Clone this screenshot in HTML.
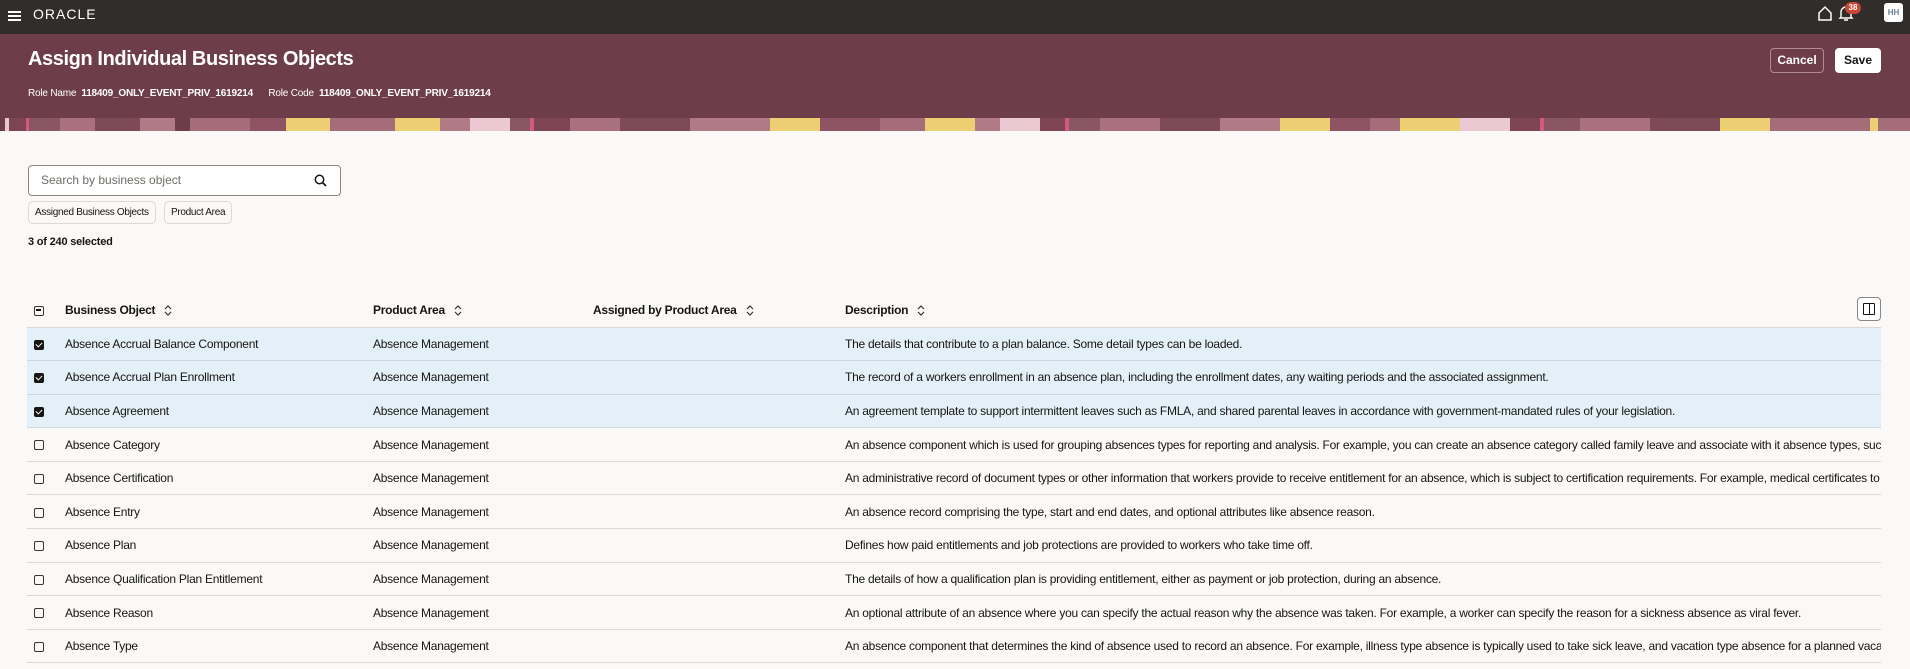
<!DOCTYPE html>
<html><head><meta charset="utf-8">
<style>
*{box-sizing:border-box;margin:0;padding:0}
body{width:1910px;height:669px;overflow:hidden;background:#faf9f8;font-family:"Liberation Sans",sans-serif;color:#161513;position:relative}
.top{position:absolute;left:0;top:0;width:1910px;height:34px;background:#312d2a}
.hdr{position:absolute;left:0;top:34px;width:1910px;height:97px;background:#6e3d4a}
.pat{position:absolute;left:0;top:118px;width:1910px;height:13px;background:
linear-gradient(90deg,#6e3d4a 0,#6e3d4a 5px,#e8c9d0 5px,#e8c9d0 9px,#7d4453 9px,#7d4453 26px,#d45a7c 26px,#d45a7c 29px,#8a5564 29px,#8a5564 60px,#a9707f 60px,#a9707f 95px,#7e4a57 95px,#7e4a57 140px,#b07a87 140px,#b07a87 175px,#6e3d4a 175px,#6e3d4a 190px,#a56d7a 190px,#a56d7a 250px,#8f5463 250px,#8f5463 286px,#eccf72 286px,#eccf72 330px,#a56d7a 330px,#a56d7a 395px,#eccf72 395px,#eccf72 440px,#b07a87 440px,#b07a87 470px,#ecc8d2 470px,#ecc8d2 510px,#8a5564 510px,#8a5564 530px,#d45a7c 530px,#d45a7c 534px,#7d4453 534px,#7d4453 570px,#a9707f 570px,#a9707f 620px,#7e4a57 620px,#7e4a57 690px,#b07a87 690px,#b07a87 770px,#eccf72 770px,#eccf72 820px,#8f5463 820px,#8f5463 880px,#a56d7a 880px,#a56d7a 925px,#eccf72 925px,#eccf72 975px,#b07a87 975px,#b07a87 1000px,#ecc8d2 1000px,#ecc8d2 1040px,#7d4453 1040px,#7d4453 1065px,#d45a7c 1065px,#d45a7c 1069px,#8a5564 1069px,#8a5564 1100px,#a9707f 1100px,#a9707f 1160px,#7e4a57 1160px,#7e4a57 1220px,#b07a87 1220px,#b07a87 1280px,#eccf72 1280px,#eccf72 1330px,#8f5463 1330px,#8f5463 1370px,#a56d7a 1370px,#a56d7a 1400px,#eccf72 1400px,#eccf72 1460px,#ecc8d2 1460px,#ecc8d2 1510px,#7d4453 1510px,#7d4453 1540px,#d45a7c 1540px,#d45a7c 1544px,#8a5564 1544px,#8a5564 1580px,#a9707f 1580px,#a9707f 1650px,#7e4a57 1650px,#7e4a57 1720px,#eccf72 1720px,#eccf72 1770px,#a56d7a 1770px,#a56d7a 1870px,#eccf72 1870px,#eccf72 1878px,#a56d7a 1878px)}
.abs{position:absolute;white-space:nowrap}
.btn{position:absolute;top:48px;height:25px;border-radius:4px;font-size:12px;font-weight:bold;text-align:center;line-height:23px}
.search{position:absolute;left:28px;top:165px;width:313px;height:31px;border:1px solid #8c8782;border-radius:4px;background:#fff;font-size:12px;color:#6f6b67;padding-left:12px;line-height:29px}
.chip{position:absolute;top:201px;height:23px;border:1px solid #dcd9d5;border-radius:5px;font-size:10px;line-height:21px;padding:0 6px;background:#faf9f8;letter-spacing:-0.3px}
table{position:absolute;left:27px;top:293px;width:1854px;border-collapse:collapse;table-layout:fixed;font-size:12px;letter-spacing:-0.25px}
td,th{white-space:nowrap;overflow:hidden;text-align:left;padding:0}
th{height:34px;font-weight:bold;border-bottom:1px solid #dcd9d5}
td{height:33.6px;border-bottom:1px solid #dcd9d5}
tr.sel td{background:#e4f0f7;border-bottom-color:#cdd7dd}
.cb{display:inline-block;width:10px;height:10px;border:1.5px solid #3a3633;border-radius:2px;vertical-align:middle;margin-left:7px;position:relative}
.cb.on{background:#161513;border-color:#161513}
.cb.on:after{content:"";position:absolute;left:2px;top:0px;width:3px;height:5px;border:solid #fff;border-width:0 1.5px 1.5px 0;transform:rotate(45deg)}
.cb.mix:after{content:"";position:absolute;left:1.2px;top:2.8px;width:4.5px;height:1.5px;background:#161513}
.srt{display:inline-block;vertical-align:middle;margin-left:9px}
</style></head><body>
<div class="top">
  <div class="abs" style="left:8px;top:11px;width:13px;height:2px;background:#fff;box-shadow:0 4px 0 #fff,0 8px 0 #fff"></div>
  <div class="abs" style="left:33px;top:6px;color:#fff;font-size:14px;letter-spacing:1px">ORACLE</div>
  <svg class="abs" style="left:1817px;top:5px" width="16" height="16" viewBox="0 0 16 16"><path d="M2 8 L8 2 L14 8 V15 H2 Z" fill="none" stroke="#fff" stroke-width="1.5"/></svg>
  <svg class="abs" style="left:1838px;top:4px" width="16" height="18" viewBox="0 0 16 18"><path d="M3 13 V8 a5 5 0 0 1 10 0 V13 L14 14 H2 Z M6 16 h4" fill="none" stroke="#fff" stroke-width="1.4"/></svg>
  <div class="abs" style="left:1845px;top:2px;width:16px;height:12px;border-radius:6px;background:#c74634;color:#fff;font-size:8px;font-weight:bold;text-align:center;line-height:12px">38</div>
  <div class="abs" style="left:1884px;top:3px;width:19px;height:19px;border-radius:3px;background:#fff;color:#6b7f97;font-size:8px;font-weight:bold;text-align:center;line-height:19px">HH</div>
</div>
<div class="hdr"></div>
<div class="pat"></div>
<div class="abs" style="left:28px;top:48px;color:#fff;font-size:20px;font-weight:bold;letter-spacing:-0.4px">Assign Individual Business Objects</div>
<div class="abs" style="left:28px;top:88px;color:#fff;font-size:10px;letter-spacing:-0.2px">Role Name&nbsp; <b>118409_ONLY_EVENT_PRIV_1619214</b>&nbsp;&nbsp;&nbsp;&nbsp;&nbsp; Role Code&nbsp; <b>118409_ONLY_EVENT_PRIV_1619214</b></div>
<div class="btn" style="left:1770px;width:54px;border:1px solid #b08a94;color:#fff">Cancel</div>
<div class="btn" style="left:1835px;width:46px;background:#fff;color:#161513;line-height:25px">Save</div>

<div class="search">Search by business object
<svg class="abs" style="left:285px;top:8px" width="13" height="13" viewBox="0 0 13 13"><circle cx="5.5" cy="5.5" r="4.2" fill="none" stroke="#161513" stroke-width="1.5"/><path d="M8.5 8.5 L12 12" stroke="#161513" stroke-width="1.6"/></svg></div>
<div class="chip" style="left:28px">Assigned Business Objects</div>
<div class="chip" style="left:164px">Product Area</div>
<div class="abs" style="left:28px;top:236px;font-size:11px;font-weight:bold;letter-spacing:-0.2px">3 of 240 selected</div>
<div class="abs" style="left:1857px;top:297px;width:24px;height:24px;border:1px solid #8c8782;border-radius:4px;background:#fff">
<div class="abs" style="left:5px;top:5px;width:12px;height:12px;border:1.5px solid #161513;border-radius:1px"></div><div class="abs" style="left:10.5px;top:5px;width:1.5px;height:12px;background:#161513"></div></div>

<table>
<colgroup><col style="width:38px"><col style="width:308px"><col style="width:220px"><col style="width:252px"><col></colgroup>
<tr><th><span class="cb mix"></span></th><th>Business Object<svg class="srt" width="8" height="11" viewBox="0 0 8 11"><path d="M1 4 L4 1 L7 4 M1 7 L4 10 L7 7" fill="none" stroke="#333" stroke-width="1.2"/></svg></th><th>Product Area<svg class="srt" width="8" height="11" viewBox="0 0 8 11"><path d="M1 4 L4 1 L7 4 M1 7 L4 10 L7 7" fill="none" stroke="#333" stroke-width="1.2"/></svg></th><th>Assigned by Product Area<svg class="srt" width="8" height="11" viewBox="0 0 8 11"><path d="M1 4 L4 1 L7 4 M1 7 L4 10 L7 7" fill="none" stroke="#333" stroke-width="1.2"/></svg></th><th>Description<svg class="srt" width="8" height="11" viewBox="0 0 8 11"><path d="M1 4 L4 1 L7 4 M1 7 L4 10 L7 7" fill="none" stroke="#333" stroke-width="1.2"/></svg></th></tr>
<tr class="sel"><td><span class="cb on"></span></td><td>Absence Accrual Balance Component</td><td>Absence Management</td><td></td><td>The details that contribute to a plan balance. Some detail types can be loaded.</td></tr>
<tr class="sel"><td><span class="cb on"></span></td><td>Absence Accrual Plan Enrollment</td><td>Absence Management</td><td></td><td>The record of a workers enrollment in an absence plan, including the enrollment dates, any waiting periods and the associated assignment.</td></tr>
<tr class="sel"><td><span class="cb on"></span></td><td>Absence Agreement</td><td>Absence Management</td><td></td><td>An agreement template to support intermittent leaves such as FMLA, and shared parental leaves in accordance with government-mandated rules of your legislation.</td></tr>
<tr><td><span class="cb"></span></td><td>Absence Category</td><td>Absence Management</td><td></td><td>An absence component which is used for grouping absences types for reporting and analysis. For example, you can create an absence category called family leave and associate with it absence types, such as</td></tr>
<tr><td><span class="cb"></span></td><td>Absence Certification</td><td>Absence Management</td><td></td><td>An administrative record of document types or other information that workers provide to receive entitlement for an absence, which is subject to certification requirements. For example, medical certificates to</td></tr>
<tr><td><span class="cb"></span></td><td>Absence Entry</td><td>Absence Management</td><td></td><td>An absence record comprising the type, start and end dates, and optional attributes like absence reason.</td></tr>
<tr><td><span class="cb"></span></td><td>Absence Plan</td><td>Absence Management</td><td></td><td>Defines how paid entitlements and job protections are provided to workers who take time off.</td></tr>
<tr><td><span class="cb"></span></td><td>Absence Qualification Plan Entitlement</td><td>Absence Management</td><td></td><td>The details of how a qualification plan is providing entitlement, either as payment or job protection, during an absence.</td></tr>
<tr><td><span class="cb"></span></td><td>Absence Reason</td><td>Absence Management</td><td></td><td>An optional attribute of an absence where you can specify the actual reason why the absence was taken. For example, a worker can specify the reason for a sickness absence as viral fever.</td></tr>
<tr><td><span class="cb"></span></td><td>Absence Type</td><td>Absence Management</td><td></td><td>An absence component that determines the kind of absence used to record an absence. For example, illness type absence is typically used to take sick leave, and vacation type absence for a planned vacation.</td></tr>
</table>
</body></html>
